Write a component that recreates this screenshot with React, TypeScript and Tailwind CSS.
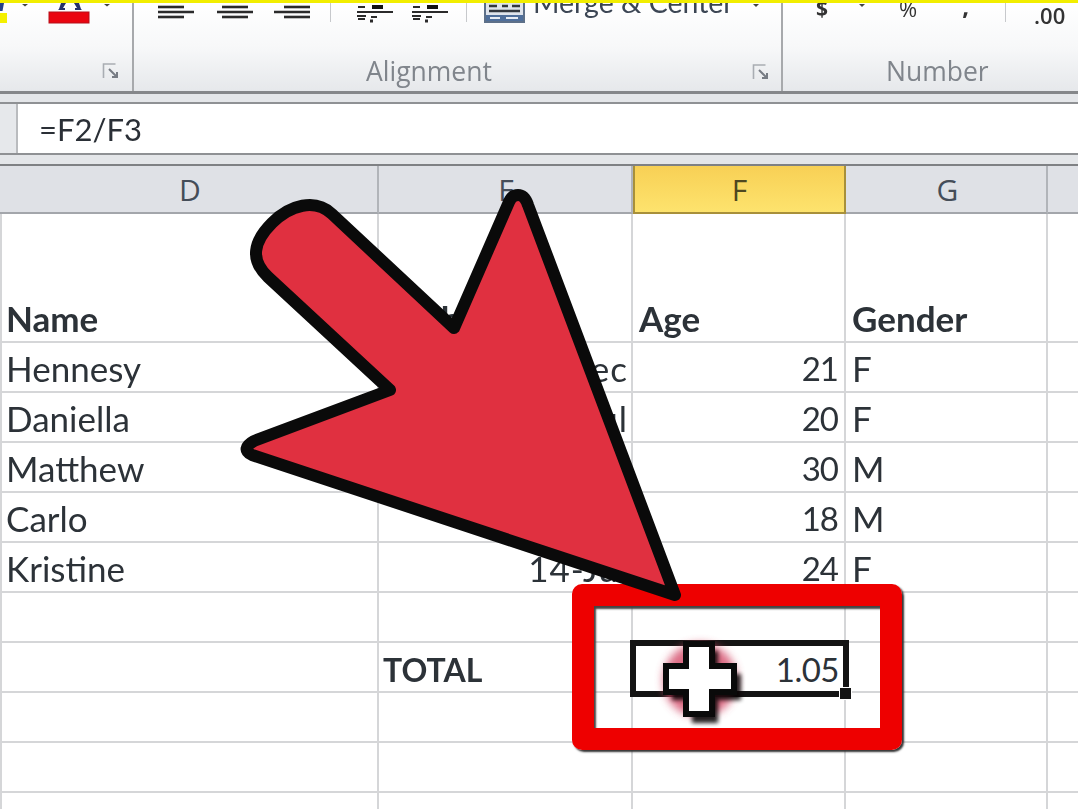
const sans = "font-['Lato','Liberation_Sans',sans-serif]";
const ui = "font-['Open_Sans',sans-serif]";

type Row = { name?: string; e?: string; f?: string; g?: string; total?: boolean };

const rows: Row[] = [
  { name: "Hennesy", e: "12-Dec", f: "21", g: "F" },
  { name: "Daniella", e: "4-Jul", f: "20", g: "F" },
  { name: "Matthew", f: "30", g: "M" },
  { name: "Carlo", f: "18", g: "M" },
  { name: "Kristine", e: "14-Jul", f: "24", g: "F" },
  {},
  { e: "TOTAL", total: true },
  {},
  {},
  {},
];

function AlignIcon({ kind }: { kind: "left" | "center" | "right" }) {
  const short = kind === "left" ? "M0 4h26" : kind === "center" ? "M5 4h26" : "M10 4h26";
  const shortLow = kind === "left" ? "M0 14h26" : kind === "center" ? "M5 14h26" : "M10 14h26";
  return (
    <svg width="36" height="17" viewBox="0 0 36 17" stroke="#2b2b2b" strokeWidth="2.6" className="shrink-0">
      <path d={short} />
      <path d="M0 9h36" />
      <path d={shortLow} />
    </svg>
  );
}

function IndentIcon() {
  return (
    <svg width="36" height="21" viewBox="0 0 36 21" stroke="#2b2b2b" strokeWidth="2.2" className="shrink-0">
      <path d="M1 4h7M0 9h36M0 13h9M1 16h7M14 14h6" />
      <path d="M15 4h11" strokeWidth="4" stroke="#111" />
      <path d="M13 18h3" strokeWidth="3" />
    </svg>
  );
}

function MergeIcon() {
  return (
    <svg width="41" height="20" viewBox="0 0 41 20" className="shrink-0">
      <rect x="1" y="-2" width="39" height="21" fill="#dfe4ec" stroke="#5d7089" strokeWidth="2" />
      <path d="M5 3h8M18 3h6M28 3h8M5 8h31" stroke="#33383f" strokeWidth="2.4" />
      <rect x="2" y="12" width="37" height="6" fill="#4f6f9b" />
      <path d="M6 15h10M22 15h12" stroke="#e8edf5" strokeWidth="2" />
    </svg>
  );
}

function FontColorIcons() {
  return (
    <svg width="110" height="21" viewBox="0 0 110 21" className="shrink-0">
      <path d="M0 0h4l-1.500 8h-2.500z" fill="#25408a" />
      <rect x="0" y="10" width="7" height="10" fill="#f4f000" />
      <path d="M22 1h6l-3 2.500z" fill="#444" />
      <path d="M59 6l2-6h5l-3 5h2v2h-7zM81 6l-2-6h-5l3 5h-2v2h7z" fill="#26316a" />
      <rect x="49" y="9" width="40" height="11" fill="#ea0510" stroke="#b5101a" strokeWidth="1" />
      <path d="M104 1h6l-3 2.500z" fill="#444" />
    </svg>
  );
}

function Caret({ className }: { className: string }) {
  return <div className={`${className} w-0 h-0 shrink-0 border-x-[3px] border-t-[3px] border-x-transparent border-t-[#444]`} />;
}

function DialogMark() {
  return (
    <svg width="18" height="18" viewBox="0 0 18 18" fill="none">
      <path d="M1.500 16V2h12" stroke="#a9adb3" strokeWidth="1.600" />
      <path d="M7 7l8 8M15 10v5h-5" stroke="#777c84" strokeWidth="2" />
    </svg>
  );
}

function Ribbon() {
  return (
    <div className="h-[91px] flex border-b-[3px] border-[#85878a] bg-gradient-to-b from-white via-[#f7f8f9] to-[#e6e8eb] blur-[0.4px]">
      <div className="w-[134px] shrink-0 border-r-2 border-[#a7a9ac] overflow-hidden">
        <FontColorIcons />
        <div className="flex justify-end pr-[12px] mt-[38px]">
          <DialogMark />
        </div>
      </div>
      <div className="w-[649px] shrink-0 border-r-2 border-[#a7a9ac] overflow-hidden">
        <div className="h-[20px] flex items-start pl-[24px]">
          <AlignIcon kind="left" />
          <div className="ml-[23px]"><AlignIcon kind="center" /></div>
          <div className="ml-[21px]"><AlignIcon kind="right" /></div>
          <div className="ml-[20px] w-px h-[19px] shrink-0 bg-[#c7c9cc]" />
          <div className="ml-[26px]"><IndentIcon /></div>
          <div className="ml-[19px]"><IndentIcon /></div>
          <div className="ml-[18px] w-px h-[19px] shrink-0 bg-[#c7c9cc]" />
          <div className="ml-[17px]"><MergeIcon /></div>
          <span className={`${sans} ml-[8px] -mt-[21px] text-[28.5px] leading-[40px] text-[#3c4654] whitespace-nowrap`}>Merge &amp; Center</span>
          <Caret className="ml-[19px] mt-px" />
        </div>
        <div className="flex items-center mt-[27px] relative">
          <span className={`${ui} ml-[232px] text-[26.5px] leading-[42px] text-[#80858c]`}>Alignment</span>
          <div className="absolute right-[11px] top-[13px]"><DialogMark /></div>
        </div>
      </div>
      <div className="flex-1 overflow-hidden">
        <div className={`${ui} h-[20px] flex items-start text-[#333] font-bold`}>
          <span className="ml-[33px] text-[21px] leading-[20px] -mt-[5px]">$</span>
          <Caret className="ml-[31px] mt-px" />
          <span className="ml-[34px] text-[22px] leading-[20px] -mt-[5px] font-normal">%</span>
          <span className="ml-[45px] text-[24px] leading-[16px] -mt-[5px]">,</span>
          <div className="ml-[36px] w-px h-[19px] shrink-0 bg-[#c7c9cc]" />
          <span className="ml-[28px] text-[22px] leading-[20px] mt-[2px] font-semibold">.00</span>
        </div>
        <div className={`${ui} mt-[27px] ml-[103px] text-[26.5px] leading-[42px] text-[#80858c]`}>Number</div>
      </div>
    </div>
  );
}

function FormulaBar() {
  return (
    <div className="h-[70px] bg-[#e4e6e9] pt-[8px]">
      <div className="h-[53px] flex border-y-2 border-[#8f9194] bg-white">
        <div className="w-[18px] shrink-0 bg-[#e6e8eb] border-r-2 border-[#b9bbbe]" />
        <div className={`${sans} pl-[21px] text-[31px] leading-[50px] text-[#2a2f36] blur-[0.3px]`}>=F2/F3</div>
      </div>
    </div>
  );
}

function HeaderCell({ label, active, width }: { label: string; active?: boolean; width: string }) {
  return (
    <div
      className={`${width} shrink-0 flex items-center justify-center text-[30px] font-medium ${ui} ${
        active
          ? "bg-gradient-to-b from-[#f8d055] to-[#fde36d] border-x-2 border-b-2 border-[#a8903a] text-[#4f4820]"
          : "bg-[#dfe1e6] border-r-2 border-[#b1b4b9] border-b-2 border-b-[#a3a6ab] text-[#454d58] pl-[3px]"
      }`}
    >
      {label}
    </div>
  );
}

function SheetHeader() {
  return (
    <div className="h-[50px] flex border-t-2 border-[#7f8184]">
      <HeaderCell label="D" width="w-[379px]" />
      <HeaderCell label="E" width="w-[254px]" />
      <HeaderCell label="F" width="w-[213px]" active />
      <HeaderCell label="G" width="w-[202px]" />
      <div className="flex-1 bg-[#dfe1e6] border-b-2 border-[#a3a6ab]" />
    </div>
  );
}

function Cell({ className, children }: { className: string; children?: React.ReactNode }) {
  return (
    <div className={`${className} shrink-0 border-r-2 border-[#d5d6d8] whitespace-nowrap overflow-hidden`}>
      {children}
    </div>
  );
}

function Sheet() {
  return (
    <div className={`${sans} text-[35px] leading-[50px] text-[#2c3238] blur-[0.4px]`}>
      <div className="h-[129px] flex border-b-2 border-[#d5d6d8] font-bold">
        <Cell className="w-[379px] pl-[4px] border-l-2 border-l-[#d5d6d8] pt-[79px]">Name</Cell>
        <Cell className="w-[254px] pl-[4px] pt-[79px]">Birth</Cell>
        <Cell className="w-[213px] pl-[6px] pt-[79px]">Age</Cell>
        <Cell className="w-[202px] pl-[6px] pt-[79px]">Gender</Cell>
      </div>
      {rows.map((r, i) => (
        <div key={i} className="h-[50px] flex border-b-2 border-[#d5d6d8]">
          <Cell className="w-[379px] pl-[4px] border-l-2 border-l-[#d5d6d8]">{r.name}</Cell>
          <Cell className={r.total ? "w-[254px] pl-[4px] pt-[2px] text-[32px] font-bold" : "w-[254px] pr-[3px] text-right tracking-[1px]"}>{r.e}</Cell>
          <Cell className="w-[213px] pr-[6px] text-right text-[33px] tracking-[-1px]">{r.f}</Cell>
          <Cell className="w-[202px] pl-[6px]">{r.g}</Cell>
        </div>
      ))}
    </div>
  );
}

function Arrow() {
  return (
    <svg className="absolute left-0 top-0 pointer-events-none" width="1078" height="809" viewBox="0 0 1078 809">
      <path
        d="M518 195 C523 195 526 199 528 205 L675 595 L252 455 C244 451 245 446 254 441 L390 390 L268 277 C250 260 253 242 272 223 C290 205 315 198 332 214 L454 328 L509 202 C511 197 514 195 518 195 Z"
        fill="#e03040"
        stroke="#0a0a0a"
        strokeWidth="12"
        strokeLinejoin="round"
      />
    </svg>
  );
}

function Cursor() {
  return (
    <svg className="absolute left-[650px] top-[630px] pointer-events-none" width="105" height="100" viewBox="0 0 105 100">
      <defs>
        <filter id="glow" x="-30%" y="-30%" width="160%" height="160%">
          <feGaussianBlur stdDeviation="4" />
        </filter>
        <filter id="soft" x="-30%" y="-30%" width="160%" height="160%">
          <feGaussianBlur stdDeviation="2" />
        </filter>
      </defs>
      <circle cx="50" cy="50" r="37" fill="#d44a68" opacity="0.8" filter="url(#glow)" />
      <path d="M37 17h26v23h23v26H63v23H37V66H17V40h20z" fill="#000" opacity="0.85" filter="url(#soft)" transform="translate(5 4)" />
      <path d="M36 14h26v22h22v26H62v22H36V62H16V36h20z" fill="#fff" stroke="#0a0a0a" strokeWidth="6" />
    </svg>
  );
}

export default function App() {
  return (
    <div className="relative w-[1078px] h-[809px] overflow-hidden bg-white">
      <div className="h-[3px] bg-[#f2ee00]" />
      <Ribbon />
      <FormulaBar />
      <SheetHeader />
      <Sheet />
      <div className="absolute left-[572px] top-[584px] w-[330px] h-[166px] rounded-[10px] border-[22px] border-[#ee0000] shadow-[2px_2px_2px_#333,inset_2px_3px_2px_#444]" />
      <Arrow />
      <div className={`${sans} absolute left-[630px] top-[640px] w-[219px] h-[57px] border-[6px] border-[#141414] pr-[4px] text-right text-[33px] leading-[46px] tracking-[-0.5px] text-[#2c3238]`}>1.05</div>
      <div className="absolute left-[839px] top-[687px] w-[13px] h-[13px] bg-[#141414] border border-white" />
      <Cursor />
    </div>
  );
}
